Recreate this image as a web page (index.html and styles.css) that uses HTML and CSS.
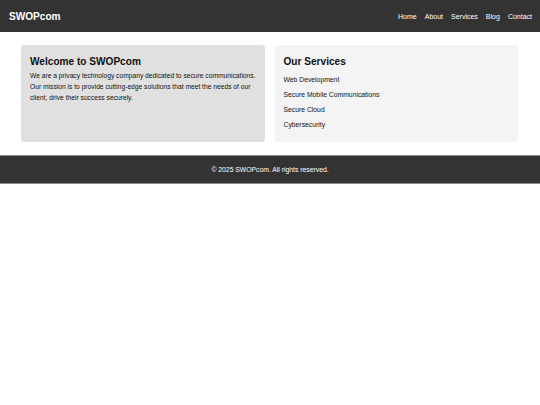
FILE: index.html
```html
<!DOCTYPE html>
<html lang="en">
<head>
<meta charset="utf-8">
<title>SWOPcom</title>
<link rel="stylesheet" href="styles.css">
</head>
<body>
<header class="site-header">
  <div class="logo">SWOPcom</div>
  <nav class="nav">
    <a href="#">Home</a>
    <a href="#">About</a>
    <a href="#">Services</a>
    <a href="#">Blog</a>
    <a href="#">Contact</a>
  </nav>
</header>
<main class="main">
  <section class="card card-welcome">
    <h2>Welcome to SWOPcom</h2>
    <p>We are a privacy technology company dedicated to secure communications. Our mission is to provide cutting-edge solutions that meet the needs of our client, drive their success securely.</p>
  </section>
  <section class="card card-services">
    <h2>Our Services</h2>
    <ul class="services">
      <li>Web Development</li>
      <li>Secure Mobile Communications</li>
      <li>Secure Cloud</li>
      <li>Cybersecurity</li>
    </ul>
  </section>
</main>
<footer class="site-footer">&copy; 2025 SWOPcom. All rights reserved.</footer>
</body>
</html>
```
FILE: styles.css
```css
html, body {
  margin: 0;
  padding: 0;
  background: #ffffff;
  font-family: "Liberation Sans", Arial, sans-serif;
  color: #111;
}
.site-header {
  height: 32px;
  background: #333333;
  display: flex;
  align-items: center;
  justify-content: space-between;
  padding: 0 8px 0 9px;
}
.logo {
  color: #ffffff;
  font-weight: bold;
  font-size: 10.1px;
}
.nav {
  display: flex;
  gap: 8px;
}
.nav a {
  color: #ffffff;
  text-decoration: none;
  font-size: 7px;
}
.main {
  display: grid;
  grid-template-columns: 1fr 1fr;
  gap: 10px;
  padding: 13px 22px 13px 21px;
}
.card {
  border-radius: 3px;
  padding: 10px 8px 8px 9px;
  min-height: 79px;
}
.card-welcome {
  background: #e0e0e0;
}
.card-services {
  background: #f4f4f4;
}
.card h2 {
  margin: 0;
  font-size: 10.1px;
  line-height: 14px;
  font-weight: bold;
  color: #111;
}
.card p {
  margin: 0.5px 0 0;
  font-size: 6.7px;
  line-height: 11px;
  color: #111;
}
.services {
  list-style: none;
  margin: 2.8px 0 0;
  padding: 0;
}
.services li {
  font-size: 6.8px;
  line-height: 15.2px;
  color: #111;
}
.site-footer {
  background: #333333;
  color: #ffffff;
  border-top: 1px solid #8a8a8a;
  border-bottom: 1px solid #8a8a8a;
  height: 27px;
  display: flex;
  align-items: center;
  justify-content: center;
  font-size: 6.8px;
}
```
